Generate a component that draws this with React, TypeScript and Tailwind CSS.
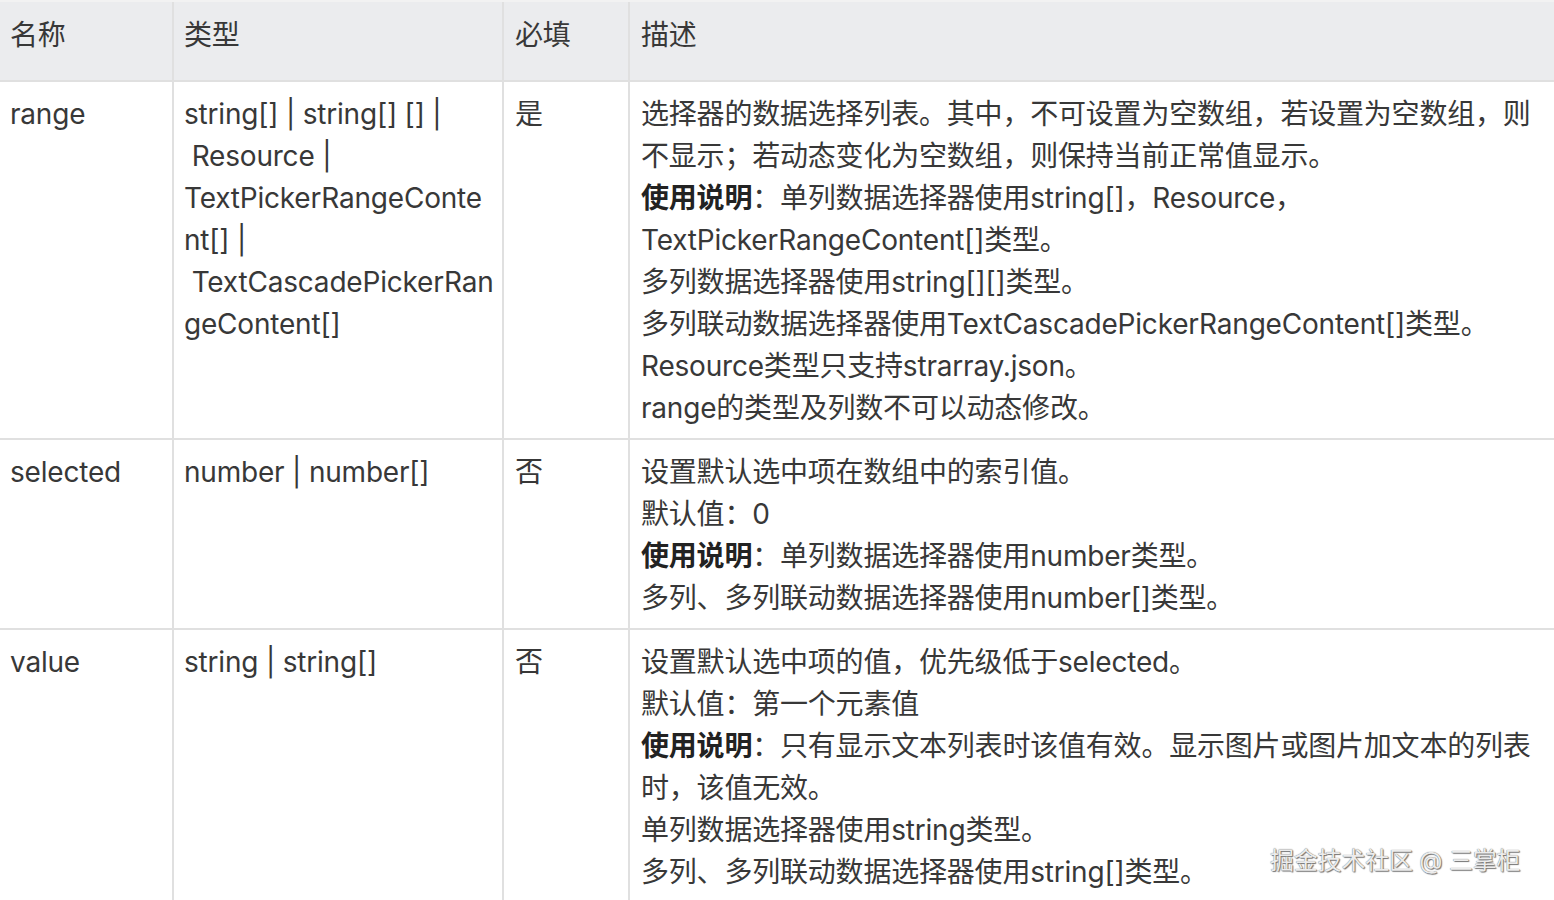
import type { ReactNode } from "react";

type Row = {
  name: string;
  type: string[];
  required: string;
  desc: ReactNode[];
};

const Note = () => <b className="font-bold text-[#222]">使用说明</b>;

const rows: Row[] = [
  {
    name: "range",
    type: [
      "string[] | string[] [] |",
      " Resource |",
      "TextPickerRangeConte",
      "nt[] |",
      " TextCascadePickerRan",
      "geContent[]",
    ],
    required: "是",
    desc: [
      "选择器的数据选择列表。其中，不可设置为空数组，若设置为空数组，则",
      "不显示；若动态变化为空数组，则保持当前正常值显示。",
      <>
        <Note />：单列数据选择器使用string[]，Resource，
      </>,
      "TextPickerRangeContent[]类型。",
      "多列数据选择器使用string[][]类型。",
      "多列联动数据选择器使用TextCascadePickerRangeContent[]类型。",
      "Resource类型只支持strarray.json。",
      "range的类型及列数不可以动态修改。",
    ],
  },
  {
    name: "selected",
    type: ["number | number[]"],
    required: "否",
    desc: [
      "设置默认选中项在数组中的索引值。",
      "默认值：0",
      <>
        <Note />：单列数据选择器使用number类型。
      </>,
      "多列、多列联动数据选择器使用number[]类型。",
    ],
  },
  {
    name: "value",
    type: ["string | string[]"],
    required: "否",
    desc: [
      "设置默认选中项的值，优先级低于selected。",
      "默认值：第一个元素值",
      <>
        <Note />：只有显示文本列表时该值有效。显示图片或图片加文本的列表
      </>,
      "时，该值无效。",
      "单列数据选择器使用string类型。",
      "多列、多列联动数据选择器使用string[]类型。",
    ],
  },
];

const cols = "grid grid-cols-[174px_330px_126px_1fr]";
const cell = "border-r-2 border-[#e0e0e0] px-[10px]";

export default function App() {
  return (
    <div
      className="relative h-[900px] w-[1554px] overflow-hidden bg-white text-[28px] leading-[42px] tracking-[-0.2px] text-[#383838]"
      style={{ fontFamily: 'Inter, "Noto Sans CJK SC", sans-serif' }}
    >
      {/* header */}
      <div className={`${cols} h-[82px] border-t-2 border-b-2 border-t-[#f2f2f2] border-b-[#e0e0e0] bg-[#ebecee]`}>
        <div className={`${cell} pt-[12px]`}>名称</div>
        <div className={`${cell} pt-[12px]`}>类型</div>
        <div className={`${cell} pt-[12px] pl-[11px]`}>必填</div>
        <div className="px-[11px] pt-[12px]">描述</div>
      </div>

      {rows.map((r) => (
        <div key={r.name} className={`${cols} border-b-2 border-[#e0e0e0]`}>
          <div className={`${cell} pt-[11px] pb-[9px]`}>{r.name}</div>
          <div className={`${cell} pt-[11px] pb-[9px]`}>
            {r.type.map((t, i) => (
              <div key={i} className="whitespace-pre">
                {t}
              </div>
            ))}
          </div>
          <div className={`${cell} pt-[11px] pb-[9px] pl-[11px]`}>{r.required}</div>
          <div className="px-[11px] pt-[11px] pb-[9px]">
            {r.desc.map((d, i) => (
              <div key={i} className="whitespace-nowrap">
                {d}
              </div>
            ))}
          </div>
        </div>
      ))}

      {/* watermark */}
      <div className="absolute left-[1270px] top-[843px] text-[24px] leading-[36px] text-[#ececec] [text-shadow:0_0_1px_#555,1px_1px_1px_#777]">
        掘金技术社区 @ 三掌柜
      </div>
    </div>
  );
}
